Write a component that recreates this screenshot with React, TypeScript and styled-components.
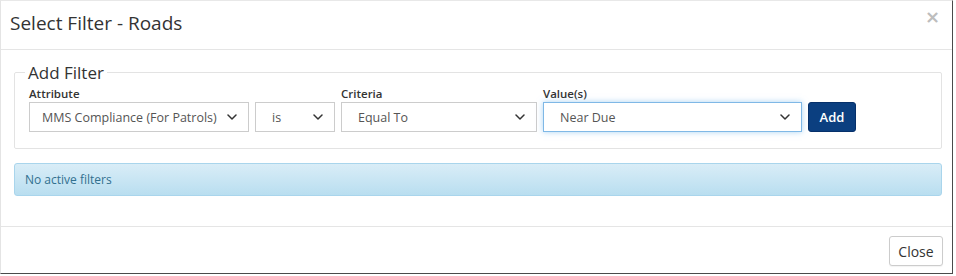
import styled, { createGlobalStyle } from 'styled-components';

const GlobalStyle = createGlobalStyle`
  html, body {
    margin: 0;
    padding: 0;
    background: #ffffff;
  }
  body {
    font-family: "Open Sans", "Liberation Sans", sans-serif;
    color: #333333;
  }
  * {
    box-sizing: border-box;
  }
`;

interface IField {
  label: string;
  value: string;
  width: number;
  inset?: number;
  focused?: boolean;
}

const FIELDS: IField[] = [
  { label: 'Attribute', value: 'MMS Compliance (For Patrols)', width: 220, inset: 12 },
  { label: '', value: 'is', width: 80 },
  { label: 'Criteria', value: 'Equal To', width: 196 },
  { label: 'Value(s)', value: 'Near Due', width: 259, focused: true },
];

const Chevron = () => (
  <svg width="10" height="6" viewBox="0 0 10 6" fill="none">
    <path d="M1 1l4 4 4-4" stroke="#333" strokeWidth="1.5" strokeLinecap="round" strokeLinejoin="round" />
  </svg>
);

const App = () => {
  return (
    <>
      <GlobalStyle />
      <Modal>
        <Header>
          <Title>Select Filter - Roads</Title>
          <CloseX>×</CloseX>
        </Header>
        <Body>
          <Fieldset>
            <Legend>Add Filter</Legend>
            <FilterRow>
              {FIELDS.map((field, i) => (
                <Field key={i}>
                  <Label>{field.label || '\u00a0'}</Label>
                  <SelectBox $width={field.width} $inset={field.inset ?? 16} $focused={!!field.focused}>
                    <SelectText>{field.value}</SelectText>
                    <Chevron />
                  </SelectBox>
                </Field>
              ))}
              <AddButton>Add</AddButton>
            </FilterRow>
          </Fieldset>
          <Alert>No active filters</Alert>
        </Body>
        <Footer>
          <CloseButton>Close</CloseButton>
        </Footer>
      </Modal>
    </>
  );
};

const Modal = styled.div`
  display: flex;
  flex-direction: column;
  width: 953px;
  height: 274px;
  background: #ffffff;
  border-top: 1px solid #e8e8e8;
  border-left: 1px solid #e4e4e4;
  border-right: 1px solid #4a4a4a;
  border-bottom: 1px solid #4a4a4a;
`;

const Header = styled.div`
  display: flex;
  align-items: center;
  justify-content: space-between;
  height: 49px;
  padding: 0 12px 4px 9px;
  border-bottom: 1px solid #e5e5e5;
`;

const Title = styled.h4`
  margin: 0;
  font-size: 19px;
  font-weight: 400;
  color: #333333;
`;

const CloseX = styled.span`
  font-family: "DejaVu Sans", sans-serif;
  font-size: 18px;
  font-weight: 700;
  line-height: 1;
  color: #bdbdbd;
  margin-top: -12px;
`;

const Body = styled.div`
  display: flex;
  flex-direction: column;
  gap: 14px;
  padding: 12px 10px 30px 13px;
  border-bottom: 1px solid #e5e5e5;
`;

const Fieldset = styled.fieldset`
  margin: 0;
  padding: 3px 14px 16px 14px;
  border: 1px solid #e3e3e3;
  border-radius: 2px;
`;

const Legend = styled.legend`
  padding: 0 3px;
  margin-left: -4px;
  font-size: 17px;
  line-height: 21px;
  color: #333333;
`;

const FilterRow = styled.div`
  display: flex;
  align-items: flex-end;
  gap: 6px;
`;

const Field = styled.div`
  display: flex;
  flex-direction: column;
`;

const Label = styled.label`
  font-size: 11.5px;
  font-weight: 600;
  line-height: 16px;
  color: #333333;
`;

const SelectBox = styled.div<{ $width: number; $inset: number; $focused: boolean }>`
  display: flex;
  align-items: center;
  justify-content: space-between;
  gap: 6px;
  width: ${({ $width }) => $width}px;
  height: 30px;
  padding: 0 11px 0 ${({ $inset }) => $inset}px;
  border: 1px solid ${({ $focused }) => ($focused ? '#7fb8e6' : '#cccccc')};
  box-shadow: ${({ $focused }) => ($focused ? '0 0 6px rgba(102, 175, 233, 0.55)' : 'none')};
  background: #ffffff;
`;

const SelectText = styled.span`
  font-size: 12.5px;
  color: #555555;
  white-space: nowrap;
`;

const AddButton = styled.button`
  height: 30px;
  width: 48px;
  border: 1px solid #06306a;
  border-radius: 3px;
  background: #0b3f80;
  color: #ffffff;
  font-family: inherit;
  font-size: 13px;
  font-weight: 600;
`;

const Alert = styled.div`
  height: 33px;
  display: flex;
  align-items: center;
  padding: 0 10px;
  border: 1px solid #a9d5ec;
  border-radius: 3px;
  background: linear-gradient(to bottom, #d9edf7 0%, #b9def0 100%);
  color: #31708f;
  font-size: 12px;
`;

const Footer = styled.div`
  display: flex;
  justify-content: flex-end;
  align-items: flex-start;
  flex: 1;
  padding: 9px 9px 0 0;
`;

const CloseButton = styled.button`
  height: 30px;
  width: 54px;
  border: 1px solid #cccccc;
  border-radius: 3px;
  background: #ffffff;
  color: #333333;
  font-family: inherit;
  font-size: 14px;
  box-shadow: 0 1px 1px rgba(0, 0, 0, 0.05);
`;

export default App;
